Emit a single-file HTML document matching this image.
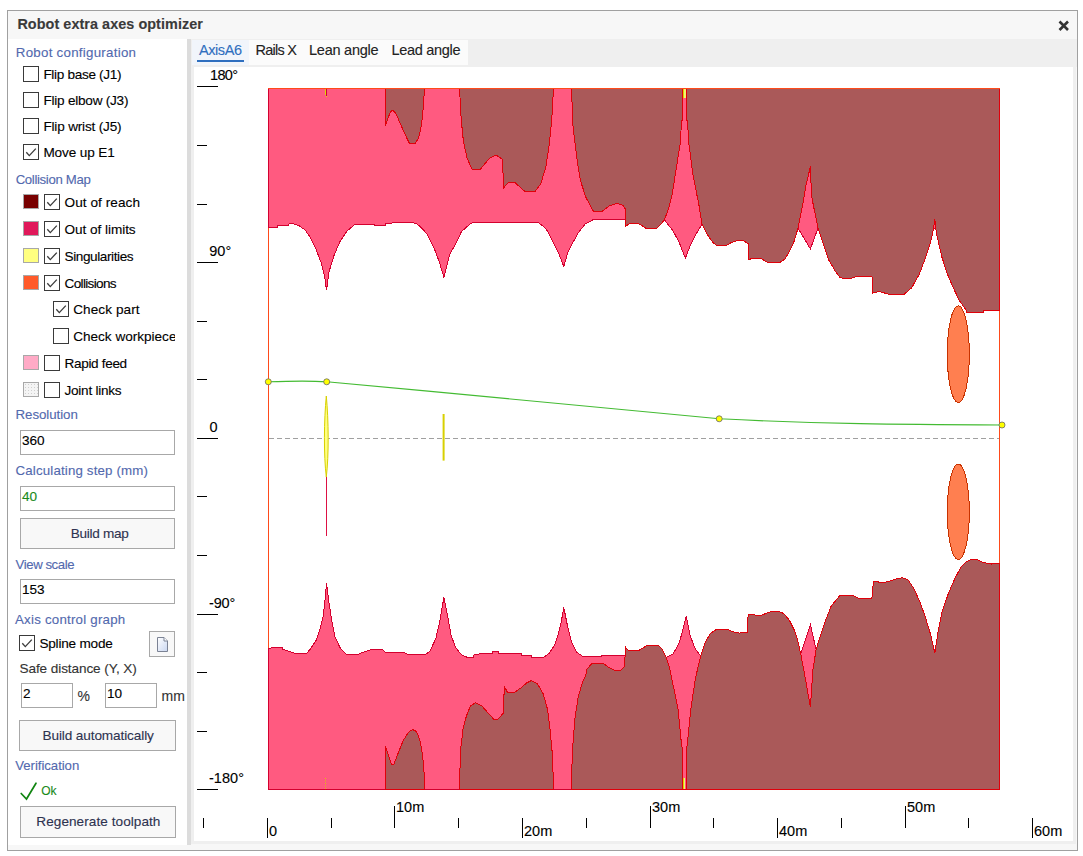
<!DOCTYPE html>
<html><head><meta charset="utf-8"><style>
html,body{margin:0;padding:0;background:#fff;width:1083px;height:856px;overflow:hidden}
body{position:relative;font-family:"Liberation Sans", sans-serif}
.t{position:absolute;white-space:nowrap;font-family:"Liberation Sans", sans-serif;-webkit-text-stroke:0.12px currentColor}
.cb{position:absolute;border:1px solid #3a3a3a;background:#fff}
.sw{position:absolute;width:14px;height:13px;border:1px solid #a8a8a8}
.inp{position:absolute;border:1px solid #a8a8a8;background:#fff}
.btn{position:absolute;border:1px solid #a8a8a8;background:#f8f8f8}
</style></head><body>
<div style="position:absolute;left:7px;top:10px;width:1069px;height:839px;border:1px solid #a0a0a0;background:#f7f7f7"></div>
<div style="position:absolute;left:8px;top:39px;width:179px;height:806px;background:#fff"></div>
<div style="position:absolute;left:187px;top:39px;width:4px;height:806px;background:#dcdcdc"></div>
<div style="position:absolute;left:191px;top:39px;width:886px;height:28px;background:#efefef"></div>
<div style="position:absolute;left:192px;top:40px;width:276px;height:25px;background:#fbfbfb"></div>
<div style="position:absolute;left:192px;top:40px;width:57px;height:25px;background:#f1f5fb"></div>
<div style="position:absolute;left:197px;top:59.5px;width:47px;height:2.5px;background:#2f6fbf"></div>
<div class="t" style="left:199.0px;top:42.38px;font-size:14.5px;line-height:17px;color:#2f6fbf;font-weight:400;letter-spacing:-0.425px;">AxisA6</div>
<div class="t" style="left:255.5px;top:42.38px;font-size:14.5px;line-height:17px;color:#222;font-weight:400;letter-spacing:-0.739px;">Rails X</div>
<div class="t" style="left:309.0px;top:42.38px;font-size:14.5px;line-height:17px;color:#222;font-weight:400;letter-spacing:-0.240px;">Lean angle</div>
<div class="t" style="left:391.4px;top:42.38px;font-size:14.5px;line-height:17px;color:#222;font-weight:400;letter-spacing:-0.284px;">Lead angle</div>
<div style="position:absolute;left:191px;top:67px;width:885px;height:777px;background:#efefef"></div>
<div style="position:absolute;left:194px;top:67px;width:879px;height:774px;background:#fff"></div>
<div class="t" style="left:17.4px;top:16.41px;font-size:14.4px;line-height:17px;color:#3a3a3a;font-weight:700;letter-spacing:0.062px;">Robot extra axes optimizer</div>
<svg width="14" height="14" style="position:absolute;left:1057px;top:18.5px"><path d="M2.5 2.5 L11 11 M11 2.5 L2.5 11" stroke="#333" stroke-width="2.6"/></svg>
<div class="t" style="left:15.8px;top:45.29px;font-size:13.3px;line-height:16px;color:#5269ae;font-weight:400;letter-spacing:0.270px;">Robot configuration</div>
<div class="cb" style="left:23px;top:66px;width:14px;height:14px"></div>
<div class="t" style="left:43.4px;top:67.49px;font-size:13.6px;line-height:16px;color:#000;font-weight:400;letter-spacing:-0.322px;">Flip base (J1)</div>
<div class="cb" style="left:23px;top:92px;width:14px;height:14px"></div>
<div class="t" style="left:43.4px;top:93.49px;font-size:13.6px;line-height:16px;color:#000;font-weight:400;letter-spacing:-0.238px;">Flip elbow (J3)</div>
<div class="cb" style="left:23px;top:118px;width:14px;height:14px"></div>
<div class="t" style="left:43.4px;top:119.49px;font-size:13.6px;line-height:16px;color:#000;font-weight:400;letter-spacing:-0.188px;">Flip wrist (J5)</div>
<div class="cb" style="left:23px;top:144px;width:14px;height:14px"><svg width="16" height="16" style="position:absolute;left:-1px;top:-1px"><path d="M3.3 8.3 L6.3 11.6 L12.8 4.6" fill="none" stroke="#3c3c3c" stroke-width="1.35"/></svg></div>
<div class="t" style="left:43.4px;top:145.49px;font-size:13.6px;line-height:16px;color:#000;font-weight:400;letter-spacing:-0.130px;">Move up E1</div>
<div class="t" style="left:15.7px;top:171.83px;font-size:13.2px;line-height:16px;color:#5269ae;font-weight:400;letter-spacing:-0.344px;">Collision Map</div>
<div class="sw" style="left:23px;top:194px;background:#780000;"></div>
<div class="cb" style="left:44px;top:194px;width:14px;height:14px"><svg width="16" height="16" style="position:absolute;left:-1px;top:-1px"><path d="M3.3 8.3 L6.3 11.6 L12.8 4.6" fill="none" stroke="#3c3c3c" stroke-width="1.35"/></svg></div>
<div class="t" style="left:64.6px;top:195.29px;font-size:13.6px;line-height:16px;color:#000;font-weight:400;letter-spacing:0.051px;">Out of reach</div>
<div class="sw" style="left:23px;top:221px;background:#e0185a;"></div>
<div class="cb" style="left:44px;top:221px;width:14px;height:14px"><svg width="16" height="16" style="position:absolute;left:-1px;top:-1px"><path d="M3.3 8.3 L6.3 11.6 L12.8 4.6" fill="none" stroke="#3c3c3c" stroke-width="1.35"/></svg></div>
<div class="t" style="left:64.6px;top:222.29px;font-size:13.6px;line-height:16px;color:#000;font-weight:400;letter-spacing:-0.058px;">Out of limits</div>
<div class="sw" style="left:23px;top:248px;background:#ffff80;"></div>
<div class="cb" style="left:44px;top:248px;width:14px;height:14px"><svg width="16" height="16" style="position:absolute;left:-1px;top:-1px"><path d="M3.3 8.3 L6.3 11.6 L12.8 4.6" fill="none" stroke="#3c3c3c" stroke-width="1.35"/></svg></div>
<div class="t" style="left:64.6px;top:249.29px;font-size:13.6px;line-height:16px;color:#000;font-weight:400;letter-spacing:-0.423px;">Singularities</div>
<div class="sw" style="left:23px;top:275px;background:#ff5a2a;"></div>
<div class="cb" style="left:44px;top:275px;width:14px;height:14px"><svg width="16" height="16" style="position:absolute;left:-1px;top:-1px"><path d="M3.3 8.3 L6.3 11.6 L12.8 4.6" fill="none" stroke="#3c3c3c" stroke-width="1.35"/></svg></div>
<div class="t" style="left:64.6px;top:276.29px;font-size:13.6px;line-height:16px;color:#000;font-weight:400;letter-spacing:-0.688px;">Collisions</div>
<div class="cb" style="left:53px;top:301px;width:14px;height:14px"><svg width="16" height="16" style="position:absolute;left:-1px;top:-1px"><path d="M3.3 8.3 L6.3 11.6 L12.8 4.6" fill="none" stroke="#3c3c3c" stroke-width="1.35"/></svg></div>
<div class="t" style="left:73.2px;top:302.29px;font-size:13.6px;line-height:16px;color:#000;font-weight:400;letter-spacing:0.072px;">Check part</div>
<div class="cb" style="left:53px;top:328px;width:14px;height:14px"></div>
<div class="t" style="left:73.2px;top:329.29px;font-size:13.6px;line-height:16px;color:#000;font-weight:400;width:101.5px;overflow:hidden;letter-spacing:-0.018px;">Check workpiece</div>
<div class="sw" style="left:23px;top:355px;background:#ffaac6;"></div>
<div class="cb" style="left:44px;top:355px;width:14px;height:14px"></div>
<div class="t" style="left:64.5px;top:356.29px;font-size:13.6px;line-height:16px;color:#000;font-weight:400;letter-spacing:-0.343px;">Rapid feed</div>
<div class="sw" style="left:23px;top:382px;background-color:#f4f4f4;background-image:radial-gradient(#d0d0d0 0.6px, transparent 0.9px);background-size:3px 3px;"></div>
<div class="cb" style="left:44px;top:382px;width:14px;height:14px"></div>
<div class="t" style="left:64.5px;top:383.29px;font-size:13.6px;line-height:16px;color:#000;font-weight:400;letter-spacing:-0.252px;">Joint links</div>
<div class="t" style="left:15.5px;top:406.99px;font-size:13.3px;line-height:16px;color:#5269ae;font-weight:400;letter-spacing:-0.060px;">Resolution</div>
<div class="inp" style="left:20px;top:430px;width:153px;height:23px"></div>
<div class="t" style="left:22.0px;top:433.09px;font-size:13.6px;line-height:16px;color:#000;font-weight:400;letter-spacing:0.000px;">360</div>
<div class="t" style="left:15.5px;top:463.09px;font-size:13.3px;line-height:16px;color:#5269ae;font-weight:400;letter-spacing:0.158px;">Calculating step (mm)</div>
<div class="inp" style="left:20px;top:486px;width:153px;height:23px"></div>
<div class="t" style="left:22.0px;top:489.29px;font-size:13.6px;line-height:16px;color:#1a8a1a;font-weight:400;letter-spacing:0.000px;">40</div>
<div class="btn" style="left:20px;top:518px;width:153px;height:29px"></div>
<div class="t" style="left:70.7px;top:526.29px;font-size:13.6px;line-height:16px;color:#2e3350;font-weight:400;letter-spacing:-0.297px;">Build map</div>
<div class="t" style="left:15.6px;top:557.33px;font-size:13.2px;line-height:16px;color:#5269ae;font-weight:400;letter-spacing:-0.429px;">View scale</div>
<div class="inp" style="left:20px;top:579px;width:153px;height:23px"></div>
<div class="t" style="left:22.0px;top:581.99px;font-size:13.6px;line-height:16px;color:#000;font-weight:400;letter-spacing:0.000px;">153</div>
<div class="t" style="left:15.0px;top:612.49px;font-size:13.3px;line-height:16px;color:#5269ae;font-weight:400;letter-spacing:0.220px;">Axis control graph</div>
<div class="cb" style="left:19px;top:635px;width:14px;height:14px"><svg width="16" height="16" style="position:absolute;left:-1px;top:-1px"><path d="M3.3 8.3 L6.3 11.6 L12.8 4.6" fill="none" stroke="#3c3c3c" stroke-width="1.35"/></svg></div>
<div class="t" style="left:39.4px;top:636.29px;font-size:13.6px;line-height:16px;color:#000;font-weight:400;letter-spacing:-0.210px;">Spline mode</div>
<div class="btn" style="left:149px;top:631px;width:24px;height:24px"><svg width="24" height="24" style="position:absolute;left:-1px;top:-1px"><defs><linearGradient id="dg" x1="0" y1="0" x2="1" y2="1"><stop offset="0" stop-color="#ffffff"/><stop offset="1" stop-color="#c9d6f0"/></linearGradient></defs><path d="M8.5 6.5 H15 L18.5 10 V20.5 H8.5 Z" fill="url(#dg)" stroke="#7b8294" stroke-width="1"/><path d="M15 6.5 V10 H18.5" fill="#fff" stroke="#7b8294" stroke-width="1"/></svg></div>
<div class="t" style="left:19.5px;top:661.49px;font-size:13.6px;line-height:16px;color:#333;font-weight:400;letter-spacing:-0.099px;">Safe distance (Y, X)</div>
<div class="inp" style="left:21px;top:683px;width:50px;height:23px"></div>
<div class="t" style="left:23.0px;top:686.29px;font-size:13.6px;line-height:16px;color:#000;font-weight:400;letter-spacing:0.000px;">2</div>
<div class="t" style="left:77.5px;top:687.65px;font-size:14px;line-height:17px;color:#333;font-weight:400;letter-spacing:0.000px;">%</div>
<div class="inp" style="left:105px;top:683px;width:50px;height:23px"></div>
<div class="t" style="left:107.0px;top:686.29px;font-size:13.6px;line-height:16px;color:#000;font-weight:400;letter-spacing:0.000px;">10</div>
<div class="t" style="left:161.4px;top:687.65px;font-size:14px;line-height:17px;color:#333;font-weight:400;letter-spacing:0.276px;">mm</div>
<div class="btn" style="left:19px;top:720px;width:155px;height:29px"></div>
<div class="t" style="left:42.5px;top:728.49px;font-size:13.6px;line-height:16px;color:#2e3350;font-weight:400;letter-spacing:-0.110px;">Build automatically</div>
<div class="t" style="left:15.3px;top:757.93px;font-size:13.2px;line-height:16px;color:#5269ae;font-weight:400;letter-spacing:-0.052px;">Verification</div>
<svg width="20" height="22" style="position:absolute;left:19px;top:780px"><path d="M2.2 13.5 L7.5 19 L17 3.2" fill="none" stroke="#118511" stroke-width="1.7" stroke-linecap="round"/></svg>
<div class="t" style="left:41.2px;top:783.84px;font-size:12px;line-height:14px;color:#1a8a1a;font-weight:400;">Ok</div>
<div class="btn" style="left:20px;top:806px;width:154px;height:30px"></div>
<div class="t" style="left:36.3px;top:814.49px;font-size:13.6px;line-height:16px;color:#2e3350;font-weight:400;letter-spacing:0.052px;">Regenerate toolpath</div>
<div style="position:absolute;left:197px;top:86px;width:21px;height:1px;background:#000"></div>
<div style="position:absolute;left:197px;top:145px;width:10px;height:1px;background:#000"></div>
<div style="position:absolute;left:197px;top:204px;width:10px;height:1px;background:#000"></div>
<div style="position:absolute;left:197px;top:262px;width:21px;height:1px;background:#000"></div>
<div style="position:absolute;left:197px;top:321px;width:10px;height:1px;background:#000"></div>
<div style="position:absolute;left:197px;top:379px;width:10px;height:1px;background:#000"></div>
<div style="position:absolute;left:197px;top:438px;width:21px;height:1px;background:#000"></div>
<div style="position:absolute;left:197px;top:496px;width:10px;height:1px;background:#000"></div>
<div style="position:absolute;left:197px;top:555px;width:10px;height:1px;background:#000"></div>
<div style="position:absolute;left:197px;top:614px;width:21px;height:1px;background:#000"></div>
<div style="position:absolute;left:197px;top:672px;width:10px;height:1px;background:#000"></div>
<div style="position:absolute;left:197px;top:731px;width:10px;height:1px;background:#000"></div>
<div style="position:absolute;left:197px;top:789px;width:21px;height:1px;background:#000"></div>
<div class="t" style="left:210.0px;top:67.38px;font-size:14.5px;line-height:17px;color:#000;font-weight:400;letter-spacing:-0.662px;">180°</div>
<div class="t" style="left:209.3px;top:243.38px;font-size:14.5px;line-height:17px;color:#000;font-weight:400;letter-spacing:0.000px;">90°</div>
<div class="t" style="left:209.4px;top:419.38px;font-size:14.5px;line-height:17px;color:#000;font-weight:400;letter-spacing:0.000px;">0</div>
<div class="t" style="left:209.0px;top:595.38px;font-size:14.5px;line-height:17px;color:#000;font-weight:400;letter-spacing:-0.184px;">-90°</div>
<div class="t" style="left:209.0px;top:770.38px;font-size:14.5px;line-height:17px;color:#000;font-weight:400;letter-spacing:0.046px;">-180°</div>
<div style="position:absolute;left:203px;top:818px;width:1px;height:10px;background:#000"></div>
<div style="position:absolute;left:267px;top:818px;width:1px;height:20px;background:#000"></div>
<div class="t" style="left:269.0px;top:823.28px;font-size:14.5px;line-height:17px;color:#000;font-weight:400;letter-spacing:0.000px;">0</div>
<div style="position:absolute;left:331px;top:818px;width:1px;height:10px;background:#000"></div>
<div style="position:absolute;left:394px;top:806px;width:1px;height:22px;background:#000"></div>
<div class="t" style="left:396.0px;top:799.28px;font-size:14.5px;line-height:17px;color:#000;font-weight:400;letter-spacing:0.000px;">10m</div>
<div style="position:absolute;left:458px;top:818px;width:1px;height:10px;background:#000"></div>
<div style="position:absolute;left:522px;top:818px;width:1px;height:20px;background:#000"></div>
<div class="t" style="left:524.0px;top:823.28px;font-size:14.5px;line-height:17px;color:#000;font-weight:400;letter-spacing:0.000px;">20m</div>
<div style="position:absolute;left:586px;top:818px;width:1px;height:10px;background:#000"></div>
<div style="position:absolute;left:650px;top:806px;width:1px;height:22px;background:#000"></div>
<div class="t" style="left:652.0px;top:799.28px;font-size:14.5px;line-height:17px;color:#000;font-weight:400;letter-spacing:0.000px;">30m</div>
<div style="position:absolute;left:713px;top:818px;width:1px;height:10px;background:#000"></div>
<div style="position:absolute;left:777px;top:818px;width:1px;height:20px;background:#000"></div>
<div class="t" style="left:779.0px;top:823.28px;font-size:14.5px;line-height:17px;color:#000;font-weight:400;letter-spacing:0.000px;">40m</div>
<div style="position:absolute;left:841px;top:818px;width:1px;height:10px;background:#000"></div>
<div style="position:absolute;left:905px;top:806px;width:1px;height:22px;background:#000"></div>
<div class="t" style="left:907.0px;top:799.28px;font-size:14.5px;line-height:17px;color:#000;font-weight:400;letter-spacing:0.000px;">50m</div>
<div style="position:absolute;left:968px;top:818px;width:1px;height:10px;background:#000"></div>
<div style="position:absolute;left:1032px;top:818px;width:1px;height:20px;background:#000"></div>
<div class="t" style="left:1034.0px;top:823.28px;font-size:14.5px;line-height:17px;color:#000;font-weight:400;letter-spacing:0.000px;">60m</div>
<svg width="1083" height="856" style="position:absolute;left:0;top:0">
<line x1="268.5" y1="88" x2="268.5" y2="789" stroke="#ff4a1a" stroke-width="1"/>
<line x1="999.5" y1="88" x2="999.5" y2="789" stroke="#ff4a1a" stroke-width="1"/>
<g stroke-width="1" stroke-linejoin="miter" shape-rendering="crispEdges">
<polygon points="268,88 268,227.5 277.8,227.5 278,225.4 288,225.4 289,223.7 293.2,223.7 299.2,225.7 305.1,230 309.4,236 316.2,249.7 321.4,263.3 324.8,277 326.5,290.3 329,271.9 334.2,254.8 340.2,241.1 347,230.9 355.5,224 374.3,224 374.3,225.4 385.4,225.4 385.4,223.7 401.7,222 411,222 417,224 422,228.3 427.3,234.3 434.1,248 439.2,261.6 443.9,277.3 447,265 450.2,253 455.4,244.5 461.4,231.7 469,224.9 473.3,222 537.4,222 542.5,225.7 547.6,230.9 552.7,241.1 557.9,251.4 561.3,259.9 563.8,266.7 568.1,251.4 573.2,242 578.4,232.6 585.2,224 592.9,219.8 625.4,219.6 664.4,219.8 673,230.9 679,242 685.4,258.2 690,246.2 696,234.3 702,224 790,224 798,228 810.4,249 818,228 999,228 999,88" fill="#ff5a80" stroke="#d4002e"/>
<polygon points="268,649.2 272.7,647.5 282.1,647.5 282.1,649.2 289,651.4 294,653.1 306.9,653.1 311.1,648 316.2,640.3 319.7,630 323.1,616.4 325.1,599.3 326.5,583.1 328.5,599.3 331.3,618 335,636.9 340.2,648 347,654.8 357.2,654.8 363.2,652.2 370.9,649.7 382.9,649.7 385.4,652.2 402.5,652.2 409.3,654.8 424.7,654.8 429.8,651.4 435.8,638.6 440.1,619.8 443.9,597.2 447.7,616.4 451.1,635.2 455.4,647.1 461.4,654.8 466.5,657 473.3,657 473.3,655.1 481.9,653.4 492.1,653.4 493,651.4 498.1,651.4 498.1,653.4 521.1,653.4 521.1,655.1 531.4,655.1 531.4,657 544.2,657 549.3,653.1 554.5,645.4 557.9,635.2 561.3,621.5 563.8,607.5 567.3,624.9 571.5,642 576.7,652.2 583.5,656.9 601.4,656.9 601.4,655.1 625.5,655.1 666,657.4 668.7,656 673,654 678.9,643.7 682.4,631.7 686.3,616.4 690,635.2 695.2,648.8 700.3,655.7 795,657 801,653.4 810.4,624.7 816.1,649.6 999,650 999,789 268,789" fill="#ff5a80" stroke="#d4002e"/>
<g stroke="#e0000a">
<polygon points="385.5,88 385.5,126 388,118 390.5,112 392.3,110.3 394.5,111.5 397,116 400,123 405,134 407.5,139.5 409.3,143 415.3,143 417.8,139.5 419.6,134.5 421,127 422.2,119 423.2,108 423.9,98.7 424.4,88" fill="#aa5959"/>
<polygon points="459.5,88 461.2,119.2 463.4,141.4 467.2,158.5 472.3,169.6 480,169.6 489.4,158.5 496.2,155 502.2,159.3 503.9,187.5 508.2,182.7 515,182.7 525.3,191.8 534.7,191.8 540.7,184 545.8,167 549.2,144.8 551.8,119.2 553.5,88" fill="#aa5959"/>
<polygon points="571.4,88 573.1,127.7 577.4,161.9 580.3,180 585.7,197 593.4,211.3 602,211.3 609.7,205.6 617.4,203.4 623.3,205.6 625.4,209 625.5,226.6 629.4,223.7 638,223.7 642.2,225.7 646.5,228.8 655.9,228.8 661.9,223.2 664.4,219.8 667,213 669.5,205.2 672.1,195 676,170 680,144.8 681.7,120.9 682.5,121 682.5,89 686.5,89 686.5,121 687.4,120.9 689,144.8 693,175 696.9,195 698.5,202.2 700.3,213.8 702,224 707.1,234.3 713.1,242.8 717.4,245.9 725.9,245.9 731,242.8 737,240.8 743.8,240.8 748.1,243.7 748.5,259.9 751.5,258.5 760.9,258.5 766.9,262 780.6,262 784.8,259 789.1,252.2 794.2,241.1 797.7,229.2 800.2,217.2 803.6,200.1 806,185 810.5,166.3 811.4,195 813.3,205 818,228 822.7,242.3 828.4,259.4 835,270.7 839.8,277.3 843.5,278.7 851.1,278.7 853,277.3 858.7,276.4 871,276.4 872.9,277.3 872.9,293 879.5,291.5 889,294.4 904.1,294.4 911.7,287.7 919.2,274.5 924.9,259.4 930.6,242.3 933.4,229 934.8,219.2 936.3,232.9 942,257.5 947.6,274.5 953.3,287.8 959,300 966.6,310.8 967,312.5 983.7,312.5 983.7,310.5 999,310.5 999,88" fill="#aa5959"/>
<polygon points="385.4,789 385.4,745.9 391.4,764.2 394,764.2 397,756 400,748.5 403,741 406.8,734.8 409.5,731.3 412.8,729.7 415.8,731 418.7,736.5 420.6,743.5 422.2,753.6 423.4,763 424.2,774.1 424.7,789" fill="#aa5959"/>
<polygon points="459.5,789 460.4,751.9 462.9,729.7 466.4,716 470.6,705.7 475.7,702.7 481.7,705.7 487.7,712.6 493.7,719.1 498,719.1 503.1,713.4 504.4,686.6 507.4,692.1 515,692.1 521,687.8 527,682.7 531.3,680.6 537.2,683.5 543.2,693.8 547.5,709.2 550.1,729.7 552.6,757 553.5,789" fill="#aa5959"/>
<polygon points="571.4,789 572.3,751.9 574.8,719.4 578.2,697.2 582.5,681.8 585.9,675 586.9,669.3 592,663.3 603.1,663.3 609.1,667.6 614.2,670.2 621.1,670.2 624.5,666.8 625.5,647.1 628.5,650.9 638,650.9 643.1,648 646.5,645.4 658.4,645.4 661.9,648.8 666.1,657.4 669.5,667.6 672.1,680 678,709.2 681.4,743.3 682.5,750 682.5,789 686.5,789 686.5,750 687.4,743.3 690.8,709.2 695.5,678 700.3,657.4 705.4,642 710.5,633.5 716.5,629.2 726.8,629.2 732.7,631.7 739.6,633.1 747.3,632.1 748.1,614.7 751.5,614.7 760.9,615.5 766.9,613 772,611.2 781.4,612.1 784.8,614.7 789.1,619.8 794.2,630 797.7,640.3 801.1,655.7 803.8,670 810.4,706.9 812.9,670 816.1,649.6 820.8,634.5 825.6,620.3 831.2,606.1 839.8,595.7 853,595.7 858.7,598.2 871.9,598.2 873.4,581.5 877.6,581.5 880.4,583 889,581.5 894.6,579.2 902.2,577.7 907.9,579.6 913.6,588.1 919.3,600.4 924.9,615.6 930.6,634.5 934.8,653.4 938.2,630.7 942,611.8 948.6,592.9 955.2,577.7 960.9,567.3 966.6,561.6 972.2,559.2 976,559.2 983.6,562.6 991.2,564.1 994,563 999,563 999,789" fill="#aa5959"/>
</g>
</g>
<line x1="268" y1="88.5" x2="1000" y2="88.5" stroke="#ff4a1a" stroke-width="1"/>
<line x1="269" y1="438.5" x2="999" y2="438.5" stroke="#a0a0a0" stroke-width="1" stroke-dasharray="5 3"/>
<ellipse cx="958.3" cy="354.2" rx="11" ry="48.4" fill="#ff7f50" stroke="#c83200" stroke-width="1" shape-rendering="crispEdges"/>
<ellipse cx="958.3" cy="511.8" rx="11" ry="47.8" fill="#ff7f50" stroke="#c83200" stroke-width="1" shape-rendering="crispEdges"/>
<line x1="326.5" y1="477" x2="326.5" y2="536" stroke="#dd1144" stroke-width="1"/>
<path d="M326.3 396 C324 420 323.6 455 326.3 477 C329 455 328.6 420 326.3 396 Z" fill="#ffff80" stroke="#d8d000" stroke-width="1"/>
<path d="M443.6 414 L443.6 460.6" stroke="#d8d000" stroke-width="2"/>
<rect x="325" y="89" width="1" height="6" fill="#d8d800"/><rect x="326" y="89" width="1" height="7" fill="#d0003a"/><rect x="326" y="96" width="1" height="1" fill="#e0e000"/>
<rect x="683" y="89" width="3" height="9" fill="#f4f470"/><rect x="683" y="89" width="1" height="9" fill="#d8d800"/>
<path d="M325.5 778 V789" stroke="#d8c800" stroke-width="1" stroke-dasharray="1 1.5"/>
<rect x="683" y="778" width="2" height="11" fill="#f4f470"/><rect x="683" y="778" width="1" height="11" fill="#d8d800"/>
<path d="M268.3 381.8 C290 381 310 380.6 326.7 381.8 C460 394 600 407 719.2 418.8 C820 424 900 424.5 1002 425" fill="none" stroke="#44bb33" stroke-width="1.15"/>
<g fill="#ffff00" stroke="#666" stroke-width="0.8">
<circle cx="268.3" cy="381.8" r="3"/>
<circle cx="326.7" cy="381.8" r="3"/>
<circle cx="719.2" cy="418.8" r="3"/>
<circle cx="1002" cy="425" r="3"/>
</g>
</svg>
</body></html>
